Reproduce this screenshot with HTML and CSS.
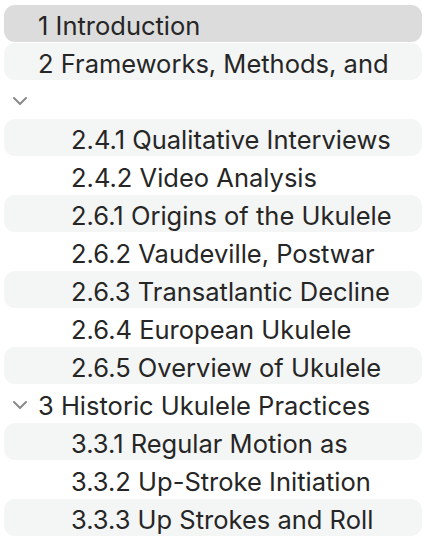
FILE: index.html
```html
<!DOCTYPE html>
<html lang="en">
<head>
<meta charset="utf-8">
<title>Outline</title>
<link rel="stylesheet" href="styles.css">
</head>
<body>
<ul class="outline">
  <li class="row selected"><span class="twist"></span><span class="label">1 Introduction</span></li>
  <li class="row striped"><span class="twist"></span><span class="label">2 Frameworks, Methods, and</span></li>
  <li class="row"><span class="twist"><svg class="chev" viewBox="0 0 16 10"><path d="M2 2 L8 8 L14 2"/></svg></span><span class="label"></span></li>
  <li class="row striped sub"><span class="label">2.4.1 Qualitative Interviews</span></li>
  <li class="row sub"><span class="label">2.4.2 Video Analysis</span></li>
  <li class="row striped sub"><span class="label">2.6.1 Origins of the Ukulele</span></li>
  <li class="row sub"><span class="label">2.6.2 Vaudeville, Postwar</span></li>
  <li class="row striped sub"><span class="label">2.6.3 Transatlantic Decline</span></li>
  <li class="row sub"><span class="label">2.6.4 European Ukulele</span></li>
  <li class="row striped sub"><span class="label">2.6.5 Overview of Ukulele</span></li>
  <li class="row"><span class="twist"><svg class="chev" viewBox="0 0 16 10"><path d="M2 2 L8 8 L14 2"/></svg></span><span class="label">3 Historic Ukulele Practices</span></li>
  <li class="row striped sub"><span class="label">3.3.1 Regular Motion as</span></li>
  <li class="row sub"><span class="label">3.3.2 Up-Stroke Initiation</span></li>
  <li class="row striped sub"><span class="label">3.3.3 Up Strokes and Roll</span></li>
</ul>
</body>
</html>
```

FILE: styles.css
```css
html, body {
  margin: 0;
  padding: 0;
  background: #ffffff;
}

body {
  font-family: Inter, "Liberation Sans", sans-serif;
  color: #262626;
  overflow: hidden;
}

.outline {
  list-style: none;
  margin: 0;
  padding: 5px 12px 0 4px;
  display: flex;
  flex-direction: column;
  gap: 1px;
}

.row {
  height: 37px;
  border-radius: 11px;
  display: flex;
  align-items: center;
  font-size: 25.5px;
  line-height: 1;
  white-space: nowrap;
}

.row.selected {
  background: #dcdcdc;
}

.row.striped {
  background: #f4f5f5;
}

.label {
  padding-top: 4px;
}

.twist {
  width: 34px;
  flex: none;
  display: flex;
  align-items: center;
  padding-left: 8px;
  padding-top: 3px;
  box-sizing: border-box;
}

.sub .label {
  padding-left: 67px;
}

.chev {
  width: 16px;
  height: 10px;
  fill: none;
  stroke: #8a8a8a;
  stroke-width: 2;
  stroke-linecap: round;
  stroke-linejoin: round;
}
```
